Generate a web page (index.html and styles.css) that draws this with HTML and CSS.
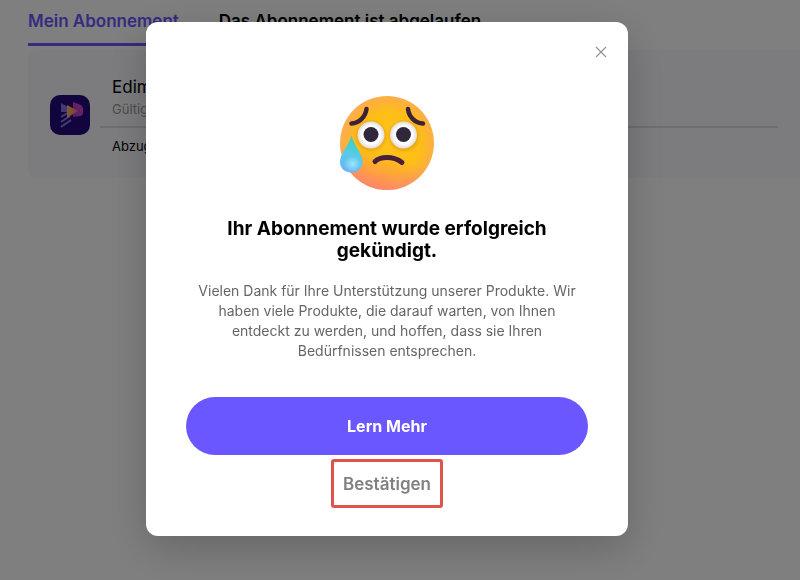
FILE: index.html
```
<!DOCTYPE html>
<html lang="de">
<head>
    <meta charset="UTF-8">
    <meta name="viewport" content="width=device-width, initial-scale=1.0">
    <title>Mein Abonnement</title>
    <link rel="stylesheet" href="styles.css">
</head>
<body>
    <div class="page">
        <nav class="tabs">
            <a href="#aktiv" class="tab active">Mein Abonnement</a>
            <a href="#abgelaufen" class="tab">Das Abonnement ist abgelaufen</a>
        </nav>
        <div class="card">
            <svg class="app-icon" viewBox="0 0 40 40" aria-hidden="true">
                <defs>
                    <linearGradient id="play" x1="0" x2="1">
                        <stop offset="0" stop-color="#ffb85a"/>
                        <stop offset="1" stop-color="#f08070"/>
                    </linearGradient>
                    <linearGradient id="pink" x1="0" x2="1" y1="1" y2="0">
                        <stop offset="0" stop-color="#a040e0"/>
                        <stop offset="1" stop-color="#f040c0"/>
                    </linearGradient>
                </defs>
                <rect width="40" height="40" rx="10" fill="#240a7c"/>
                <path d="M11 8l7 4v5l-7 0z" fill="#8a70ee"/>
                <path d="M11 22l8-5M11 27l9-6M11 32l10-7" stroke="#8f78f0" stroke-width="2"/>
                <path d="M23 7l8 3 2 3v6l-2 2-8 1z" fill="url(#pink)"/>
                <path d="M17 10l11 6-11 7z" fill="url(#play)"/>
            </svg>
            <div class="info">
                <div class="plan">
                    <div class="name">Edimakor</div>
                    <div class="valid">Gültig bis</div>
                </div>
                <div class="renew">Abzug</div>
            </div>
        </div>
    </div>

    <div class="overlay">
        <div class="dialog" role="dialog" aria-labelledby="title">
            <button class="close-btn" aria-label="Schließen">
                <svg viewBox="0 0 12 12" width="12" height="12"><path d="M1 1l10 10M11 1L1 11" stroke="#93939b" stroke-width="1.2"/></svg>
            </button>
            <svg class="emoji" viewBox="0 0 96 96" aria-hidden="true">
                <defs>
                    <radialGradient id="face" cx=".52" cy=".5" r=".54">
                        <stop offset="0" stop-color="#ffc21a"/>
                        <stop offset=".62" stop-color="#fdbe16"/>
                        <stop offset=".85" stop-color="#fcb03c"/>
                        <stop offset="1" stop-color="#fbae60"/>
                    </radialGradient>
                    <linearGradient id="chin" x1=".55" y1=".65" x2=".45" y2="1">
                        <stop offset="0" stop-color="#ff7d6f" stop-opacity="0"/>
                        <stop offset="1" stop-color="#ff7d6f" stop-opacity=".8"/>
                    </linearGradient>
                    <radialGradient id="eye">
                        <stop offset=".65" stop-color="#ffffff"/>
                        <stop offset="1" stop-color="#e2dcdc"/>
                    </radialGradient>
                    <radialGradient id="shade">
                        <stop offset=".7" stop-color="#d98a00" stop-opacity=".55"/>
                        <stop offset="1" stop-color="#d98a00" stop-opacity="0"/>
                    </radialGradient>
                    <linearGradient id="tear" x1=".6" y1="0" x2=".4" y2="1">
                        <stop offset="0" stop-color="#35cdb8"/>
                        <stop offset=".5" stop-color="#56cce8"/>
                        <stop offset="1" stop-color="#6fb2fa"/>
                    </linearGradient>
                    <radialGradient id="glow">
                        <stop offset="0" stop-color="#9be6fa"/>
                        <stop offset="1" stop-color="#9be6fa" stop-opacity="0"/>
                    </radialGradient>
                </defs>
                <circle cx="48" cy="48" r="47" fill="url(#face)"/>
                <circle cx="48" cy="48" r="47" fill="url(#chin)"/>
                <circle cx="32" cy="41" r="17" fill="url(#shade)"/>
                <circle cx="65" cy="41" r="17" fill="url(#shade)"/>
                <circle cx="32" cy="40" r="13.5" fill="url(#eye)"/>
                <circle cx="64.5" cy="40" r="13.5" fill="url(#eye)"/>
                <circle cx="32" cy="39.5" r="7.5" fill="#30273c"/>
                <circle cx="64.5" cy="39.5" r="7.5" fill="#30273c"/>
                <g fill="none" stroke="#3d2136" stroke-width="4.5" stroke-linecap="round">
                    <path d="M12.5 28.5C20 28 26.5 22 27.5 14"/>
                    <path d="M69 14C70 22 76 28 84 28.5"/>
                    <path d="M36 66.5C41 61.5 54 60.5 63 67.5" stroke="#48203c" stroke-width="5"/>
                </g>
                <path d="M12.500 40.500C14.500 50 23.500 58 23.500 67C23.500 81 1 81 1 67C1 58 10.500 50 12.500 40.500Z" fill="url(#tear)"/>
                <ellipse cx="13.5" cy="69" rx="9" ry="8" fill="url(#glow)"/>
            </svg>
            <h2 id="title">Ihr Abonnement wurde erfolgreich gekündigt.</h2>
            <p>Vielen Dank für Ihre Unterstützung unserer Produkte. Wir haben viele Produkte, die darauf warten, von Ihnen entdeckt zu werden, und hoffen, dass sie Ihren Bedürfnissen entsprechen.</p>
            <button class="more-btn">Lern Mehr</button>
            <button class="confirm-btn">Bestätigen</button>
        </div>
    </div>
</body>
</html>
```
FILE: styles.css
```
* {
    box-sizing: border-box;
}
body {
    font-family: Inter, "Open Sans", sans-serif;
    background-color: white;
    color: #000;
    margin: 0;
    overflow: hidden;
}
.page {
    padding-left: 28px;
}
.tabs {
    display: flex;
    gap: 40px;
    height: 46px;
    margin-bottom: 4px;
}
.tab {
    padding-top: 11px;
    font-size: 17px;
    line-height: 20px;
    font-weight: 600;
    color: #000;
    text-decoration: none;
    white-space: nowrap;
}
.tab.active {
    color: #6a57ff;
    border-bottom: 3px solid #6a57ff;
}
.card {
    display: flex;
    align-items: center;
    gap: 10px;
    height: 128px;
    padding: 2px 22px 0;
    background-color: #f9f9fc;
    border-radius: 8px 0 0 8px;
}
.app-icon {
    width: 40px;
    height: 40px;
    flex-shrink: 0;
}
.info {
    flex: 1;
}
.plan {
    padding: 0 12px 7px;
    border-bottom: 2px solid #dcdcdf;
}
.name {
    font-size: 17px;
    line-height: 24px;
}
.valid {
    font-size: 13px;
    line-height: 20px;
    color: #999;
}
.renew {
    padding: 8px 12px 0;
    font-size: 13px;
    line-height: 20px;
}
.overlay {
    position: fixed;
    inset: 0;
    display: flex;
    justify-content: center;
    align-items: flex-start;
    padding: 22px 26px 22px 0;
    background-color: rgba(0, 0, 0, 0.5);
}
.dialog {
    position: relative;
    display: flex;
    flex-direction: column;
    align-items: center;
    width: 100%;
    max-width: 482px;
    padding: 73px 40px 28px;
    background-color: white;
    border-radius: 12px;
    box-shadow: 0 12px 40px rgba(0, 0, 0, 0.2);
    text-align: center;
}
.close-btn {
    position: absolute;
    top: 20px;
    right: 17px;
    display: flex;
    align-items: center;
    justify-content: center;
    width: 20px;
    height: 20px;
    padding: 0;
    background: none;
    border: none;
    cursor: pointer;
}
.emoji {
    width: 96px;
    height: 96px;
}
h2 {
    margin: 27px 0 19px;
    max-width: 340px;
    font-size: 19px;
    line-height: 22px;
    font-weight: 700;
}
p {
    margin: 0 0 36px;
    max-width: 390px;
    font-size: 14px;
    line-height: 20px;
    color: #666;
}
.more-btn {
    width: 100%;
    height: 58px;
    margin-bottom: 4px;
    font-family: inherit;
    font-size: 16px;
    font-weight: 700;
    color: white;
    background-color: #6a57ff;
    border: none;
    border-radius: 29px;
    cursor: pointer;
}
.confirm-btn {
    height: 49px;
    padding: 0 9px;
    font-family: inherit;
    font-size: 17px;
    font-weight: 600;
    color: #808080;
    background: none;
    border: 3px solid #e0524a;
    border-radius: 3px;
    cursor: pointer;
}
```
